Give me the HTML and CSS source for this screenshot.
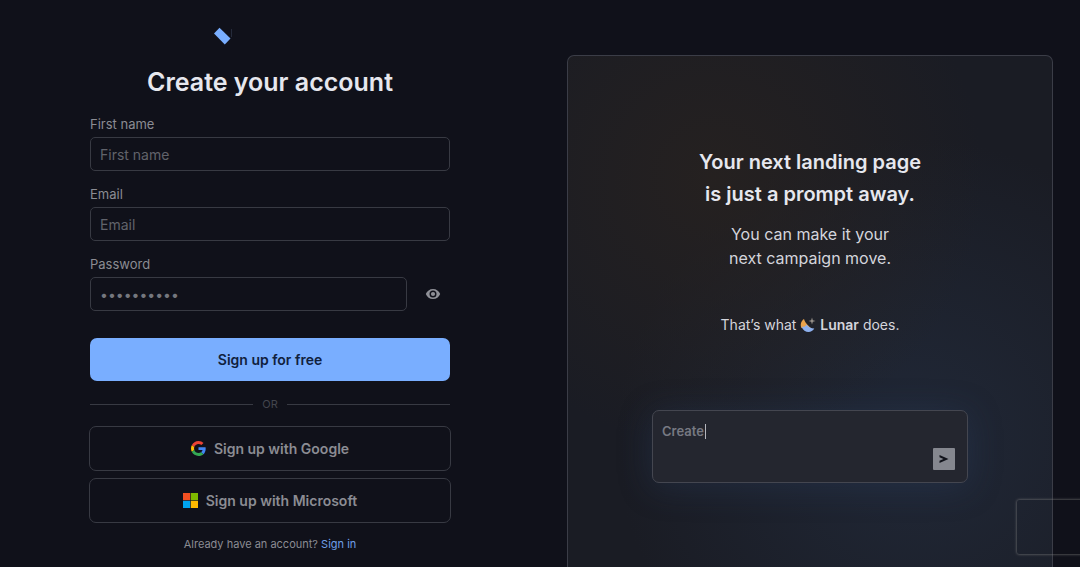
FILE: index.html
```html
<!DOCTYPE html>
<html lang="en">
<head>
    <meta charset="UTF-8">
    <meta name="viewport" content="width=device-width, initial-scale=1.0">
    <title>Create your account</title>
    <link rel="stylesheet" href="styles.css">
</head>
<body>
    <div class="page">
        <main class="signup">
            <svg class="logo" viewBox="0 0 114 22" aria-hidden="true">
                <path d="M6.500 1.800L17.500 12.500L11.800 18.500L1 7.500Z" fill="#79aeff"/>
                <path d="M18.500 3V11" stroke="#252b3b"/>
            </svg>
            <h1 class="title">Create your account</h1>

            <form class="form">
                <div class="field">
                    <label class="label" for="first-name">First name</label>
                    <input class="input" type="text" id="first-name" placeholder="First name">
                </div>
                <div class="field">
                    <label class="label" for="email">Email</label>
                    <input class="input" type="email" id="email" placeholder="Email">
                </div>
                <div class="field">
                    <label class="label" for="password">Password</label>
                    <div class="password-row">
                        <input class="input input-password" type="password" id="password" placeholder="••••••••••">
                        <button class="eye" type="button" aria-label="Show password">
                            <svg width="16" height="16" viewBox="0 0 16 16">
                                <path fill-rule="evenodd" fill="#8f9097" d="M8 3C4.700 3 2 5 .8 8C2 11 4.700 13 8 13S14 11 15.200 8C14 5 11.300 3 8 3ZM8 11.500A3.500 3.500 0 1 1 8 4.500A3.500 3.500 0 0 1 8 11.500Z"/>
                                <circle cx="8" cy="8" r="2.100" fill="#8f9097"/>
                            </svg>
                        </button>
                    </div>
                </div>
                <button class="btn btn-primary" type="submit">Sign up for free</button>
            </form>

            <div class="divider">OR</div>

            <div class="socials">
                <button class="btn btn-outline" type="button">
                    <svg width="15" height="15" viewBox="0 0 48 48" aria-hidden="true">
                        <path fill="#EA4335" d="M24 9.500c3.540 0 6.710 1.220 9.210 3.600l6.850-6.850C35.900 2.380 30.470 0 24 0 14.620 0 6.510 5.380 2.560 13.220l7.980 6.190C12.430 13.720 17.740 9.500 24 9.500z"/>
                        <path fill="#4285F4" d="M46.980 24.550c0-1.570-.15-3.090-.38-4.550H24v9.020h12.940c-.58 2.960-2.260 5.480-4.780 7.180l7.730 6c4.510-4.180 7.090-10.360 7.090-17.650z"/>
                        <path fill="#FBBC05" d="M10.530 28.590c-.48-1.450-.76-2.990-.76-4.590s.27-3.140.76-4.590l-7.980-6.190C.92 16.460 0 20.120 0 24c0 3.880.92 7.540 2.560 10.780l7.970-6.190z"/>
                        <path fill="#34A853" d="M24 48c6.480 0 11.930-2.130 15.890-5.810l-7.730-6c-2.150 1.450-4.920 2.300-8.160 2.300-6.260 0-11.570-4.220-13.470-9.910l-7.980 6.190C6.510 42.620 14.620 48 24 48z"/>
                    </svg>
                    Sign up with Google
                </button>
                <button class="btn btn-outline" type="button">
                    <svg width="15" height="15" viewBox="0 0 15 15" aria-hidden="true">
                        <path fill="#f25022" d="M0 0h7.200v7.200H0z"/>
                        <path fill="#7fba00" d="M7.800 0h7.200v7.200H7.800z"/>
                        <path fill="#00a4ef" d="M0 7.800h7.200v7.200H0z"/>
                        <path fill="#ffb900" d="M7.800 7.800h7.200v7.200H7.800z"/>
                    </svg>
                    Sign up with Microsoft
                </button>
            </div>

            <p class="signin">Already have an account? <a class="signin-link" href="#">Sign in</a></p>
        </main>

        <aside class="promo">
            <div class="panel">
                <h2 class="headline">Your next landing page<br>is just a prompt away.</h2>
                <p class="subline">You can make it your<br>next campaign move.</p>
                <p class="tagline">
                    That’s what
                    <svg class="moon" width="16" height="16" viewBox="0 0 16 16" aria-hidden="true">
                        <path fill="#e9a24b" d="M4 2C.8 4 0 8.500 1.500 11L12 12C9 9 5.500 7 4 2Z"/>
                        <path fill="#8db0ee" d="M1.500 9.500C3.500 10.300 5.500 9.500 6.500 7.500C8.500 10.200 11 11.500 14.300 11.600C11.500 16.500 4 16.300 1.500 9.500Z"/>
                        <path fill="#9c958e" d="M12 .5L12.800 3.200L15.500 4L12.800 4.800L12 7.500L11.200 4.800L8.500 4L11.200 3.200Z"/>
                    </svg>
                    <strong>Lunar</strong> does.
                </p>
                <div class="prompt">
                    <div class="prompt-line">
                        <input class="prompt-input" type="text" value="Create" aria-label="Prompt">
                        <span class="caret"></span>
                    </div>
                    <button class="send" type="button" aria-label="Send">
                        <svg width="12" height="12" viewBox="0 0 12 12">
                            <path d="M1.500 2L10.500 6L1.500 10V7.800L5.500 6L1.500 4.200Z" fill="#11131b"/>
                        </svg>
                    </button>
                </div>
            </div>
        </aside>
    </div>

    <div class="badge"></div>
</body>
</html>
```

FILE: styles.css
```css
:root {
    --background: #10111a;
    --border: #383a43;
    --text-primary: #e6e7ee;
    --text-secondary: #8b8c93;
    --text-muted: #61636b;
    --primary-color: #79aeff;
}

* {
    margin: 0;
    padding: 0;
    box-sizing: border-box;
}

body {
    background: var(--background);
    color: var(--text-primary);
    font-family: Inter, sans-serif;
    overflow: hidden;
}

button,
input {
    font-family: inherit;
}

.page {
    display: grid;
    grid-template-columns: 1fr 1fr;
    height: 100vh;
}

/* Left column */
.signup {
    width: 100%;
    max-width: 362px;
    margin: 0 auto;
    padding: 26px 0 12px;
}

.logo {
    display: block;
    width: 114px;
    height: 22px;
    margin: 0 auto;
}

.title {
    margin: 18px 0;
    font-size: 25px;
    line-height: 32px;
    font-weight: 600;
    text-align: center;
}

.form {
    padding: 0 1px;
}

.field {
    margin-bottom: 15px;
}

.label {
    display: block;
    margin-bottom: 5px;
    font-size: 13px;
    line-height: 16px;
    color: var(--text-secondary);
}

.input {
    display: block;
    width: 100%;
    height: 34px;
    padding: 0 9px;
    background: transparent;
    border: 1px solid var(--border);
    border-radius: 5px;
    color: var(--text-primary);
    font-size: 14px;
}

.input::placeholder {
    color: var(--text-muted);
    opacity: 1;
}

.password-row {
    display: flex;
    align-items: center;
    gap: 9px;
}

.input-password {
    flex: 1;
    min-width: 0;
}

.input-password::placeholder {
    color: #75777e;
}

.eye {
    display: flex;
    align-items: center;
    justify-content: center;
    width: 34px;
    height: 34px;
    background: none;
    border: none;
    cursor: pointer;
}

.btn {
    display: flex;
    align-items: center;
    justify-content: center;
    gap: 8px;
    width: 100%;
    border-radius: 7px;
    font-size: 14px;
    font-weight: 600;
    cursor: pointer;
}

.btn-primary {
    height: 43px;
    margin-top: 27px;
    border: none;
    background: var(--primary-color);
    color: #10213d;
}

.btn-outline {
    height: 45px;
    background: transparent;
    border: 1px solid var(--border);
    color: var(--text-secondary);
}

.divider {
    display: flex;
    align-items: center;
    gap: 9px;
    margin: 15px 1px 14px;
    font-size: 11px;
    line-height: 16px;
    color: #43454d;
}

.divider::before,
.divider::after {
    content: "";
    flex: 1;
    height: 1px;
    background: var(--border);
}

.socials {
    display: grid;
    gap: 7px;
}

.signin {
    margin-top: 13px;
    font-size: 11px;
    line-height: 16px;
    text-align: center;
    color: var(--text-secondary);
}

.signin-link {
    color: #6f9fe8;
    text-decoration: none;
}

/* Right column */
.promo {
    display: flex;
    padding: 55px 27px 0;
}

.panel {
    flex: 1;
    padding: 90px 84px 0;
    border: 1px solid #3b3d47;
    border-bottom: none;
    border-radius: 7px 7px 0 0;
    background:
        radial-gradient(circle at 30% 24%, rgba(40, 34, 31, 0.8), rgba(40, 34, 31, 0) 270px),
        radial-gradient(circle at 72% 75%, rgba(34, 43, 60, 0.8), rgba(34, 43, 60, 0) 300px),
        #1a1c24;
    text-align: center;
}

.headline {
    font-size: 20px;
    line-height: 32px;
    font-weight: 600;
}

.subline {
    margin-top: 12px;
    font-size: 16px;
    line-height: 24px;
    color: #d4d5dc;
}

.tagline {
    margin-top: 43px;
    font-size: 14px;
    line-height: 24px;
    color: #d4d5dc;
}

.tagline strong {
    font-weight: 600;
}

.moon {
    vertical-align: -3px;
}

.prompt {
    display: flex;
    flex-direction: column;
    justify-content: space-between;
    height: 73px;
    margin-top: 73px;
    padding: 12px 12px 12px 9px;
    border: 1px solid #444650;
    border-radius: 7px;
    background: #24262f;
    box-shadow: 0 4px 32px rgba(42, 64, 98, 0.35);
}

.prompt-line {
    display: flex;
    align-items: center;
    gap: 1px;
}

.prompt-input {
    field-sizing: content;
    background: none;
    border: none;
    outline: none;
    color: #777982;
    font-size: 13px;
    font-weight: 600;
}

.caret {
    width: 1px;
    height: 15px;
    background: #b5b6bd;
}

.send {
    display: flex;
    align-items: center;
    justify-content: center;
    align-self: flex-end;
    width: 22px;
    height: 22px;
    background: #85878f;
    border: none;
    border-radius: 1px;
    cursor: pointer;
}

/* Widget tucked behind the right edge of the window */
.badge {
    position: fixed;
    right: -167px;
    bottom: 13px;
    width: 230px;
    height: 54px;
    border-radius: 2px;
    box-shadow: 0 0 3px #808080;
}
```
